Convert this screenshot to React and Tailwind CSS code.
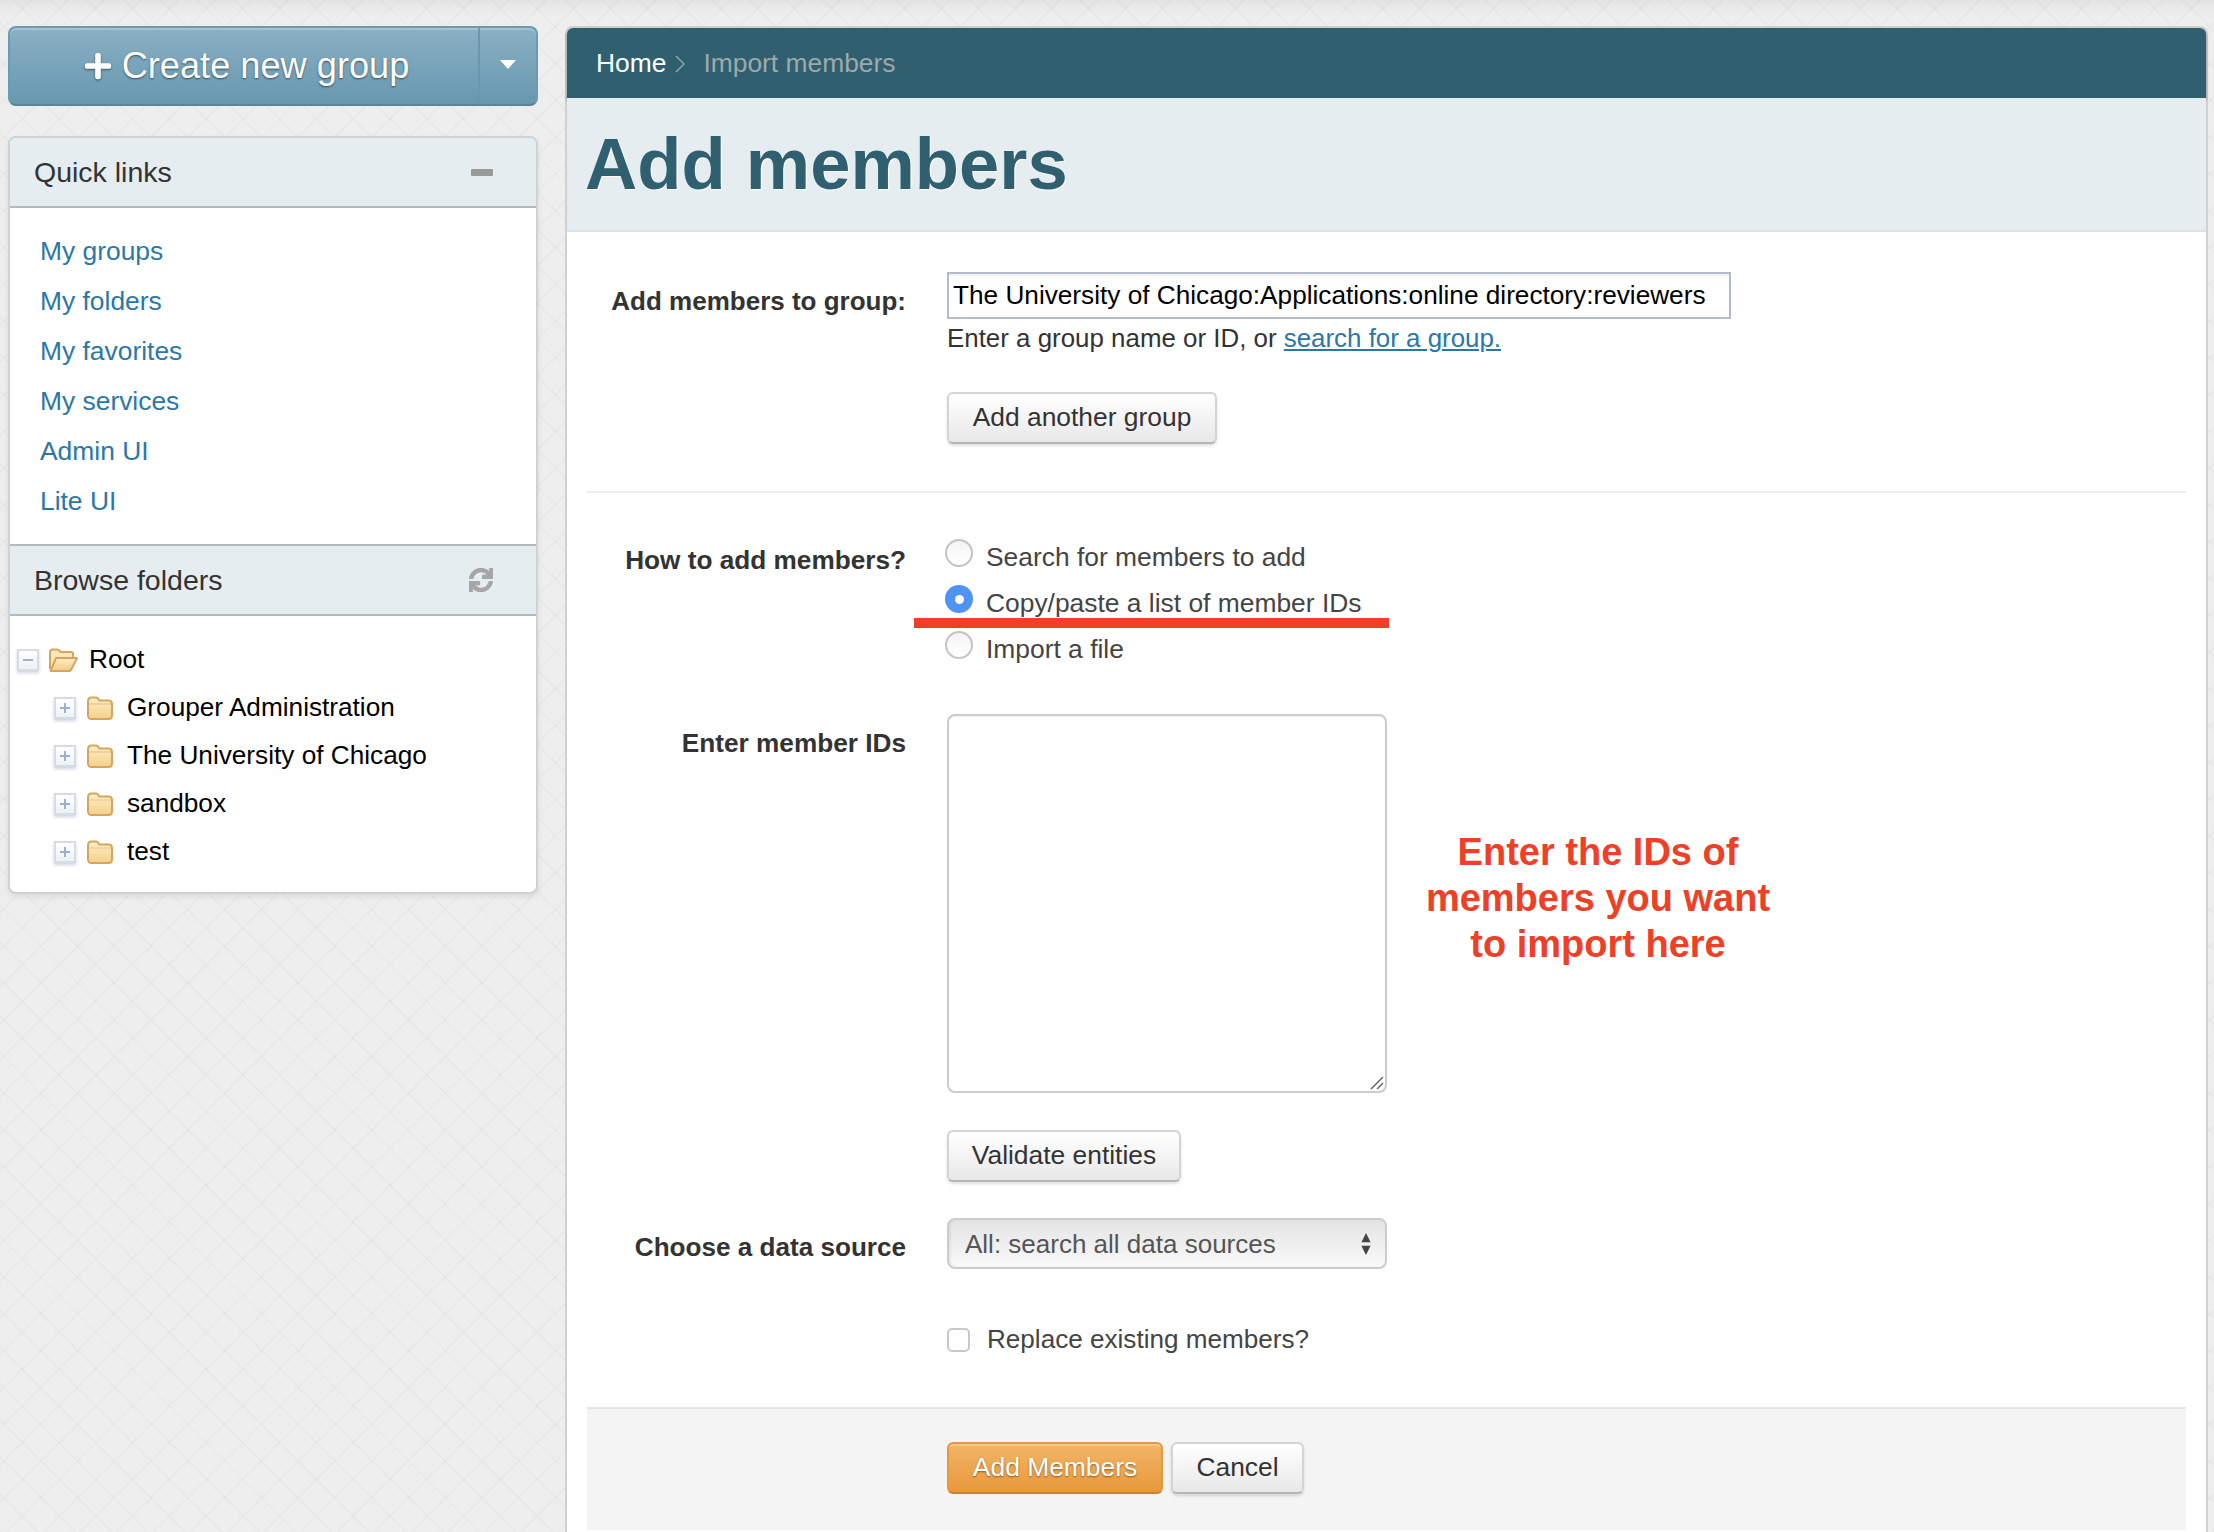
import { FaPlus, FaSync } from "react-icons/fa";

const quickLinks = ["My groups", "My folders", "My favorites", "My services", "Admin UI", "Lite UI"];
const treeItems = ["Grouper Administration", "The University of Chicago", "sandbox", "test"];
const radios = [
  { label: "Search for members to add", checked: false },
  { label: "Copy/paste a list of member IDs", checked: true },
  { label: "Import a file", checked: false },
];

const whiteBtn =
  "flex h-[52px] items-center justify-center rounded-md border-2 border-[#d4d4d4] border-b-[#b5b5b5] bg-gradient-to-b from-white to-[#e8e8e8] text-[26.4px] text-[#333] shadow-[0_2px_3px_rgba(0,0,0,0.12)]";

function ClosedFolder() {
  return (
    <svg width="28" height="26" viewBox="0 0 28 26" className="shrink-0">
      <defs>
        <linearGradient id="closedFill" x1="0" y1="0" x2="0" y2="1">
          <stop offset="0" stopColor="#fdf0cc" />
          <stop offset="1" stopColor="#f6cf86" />
        </linearGradient>
      </defs>
      <path
        d="M2 6.500C2 4 3.500 2.500 5.500 2.500h4.500c1.500 0 2.200 1 3.200 3H22.500c2.300 0 3.500 1.300 3.500 3.500V20.500c0 2.300-1.200 3.500-3.500 3.500H5.500c-2.300 0-3.500-1.200-3.500-3.500Z"
        fill="url(#closedFill)"
        stroke="#d6a55f"
        strokeWidth="2"
      />
      <path d="M3 9h22" stroke="#e8c388" strokeWidth="1.200" />
    </svg>
  );
}

function OpenFolder() {
  return (
    <svg width="31" height="26" viewBox="0 0 31 26" className="shrink-0">
      <defs>
        <linearGradient id="openFill" x1="0" y1="0" x2="0" y2="1">
          <stop offset="0" stopColor="#fdeec8" />
          <stop offset="1" stopColor="#f5cb80" />
        </linearGradient>
      </defs>
      <path
        d="M2 22V5c0-1.500 1-2.500 2.500-2.500h5c1.500 0 2 1 3 2.500H23c1.200 0 2 .8 2 2v3"
        fill="#fbe7b8"
        stroke="#d6a55f"
        strokeWidth="2"
      />
      <path
        d="M2.500 24 8 11h21l-5.500 11c-.5 1.200-1.200 2-2.500 2Z"
        fill="url(#openFill)"
        stroke="#d6a55f"
        strokeWidth="2"
        strokeLinejoin="round"
      />
    </svg>
  );
}

function TreeToggle({ open = false }) {
  return (
    <span className="relative flex h-[22px] w-[22px] shrink-0 items-center justify-center border-2 border-[#d5dce9] bg-gradient-to-b from-white to-[#eef1f7] shadow-[0_2px_3px_rgba(90,110,150,0.3)]">
      <span className="h-[2px] w-[10px] bg-[#9fb0cc]" />
      {!open && <span className="absolute h-[10px] w-[2px] bg-[#9fb0cc]" />}
    </span>
  );
}

function PanelHeader({ title, children }) {
  return (
    <div className="flex h-[70px] items-center justify-between border-b-2 border-[#b4b9bc] bg-[#e6edf0] pl-[24px] pr-[43px] text-[28.5px] text-[#333]">
      <span>{title}</span>
      {children}
    </div>
  );
}

function Sidebar() {
  return (
    <aside className="ml-2 mr-[27px] w-[530px] shrink-0 pt-[26px]">
      <div className="flex h-[80px] rounded-lg border-2 border-[#6c9ab0] border-b-[#5b8399] bg-gradient-to-b from-[#8ab0c4] to-[#6798b0] text-white shadow-[inset_0_2px_0_rgba(255,255,255,0.25)]">
        <div className="flex flex-1 items-center justify-center gap-[9px] pl-[4px] text-[36.2px] [text-shadow:0_1px_2px_rgba(0,0,0,0.55)]">
          <FaPlus className="h-[30px] w-[30px] drop-shadow-[0_1px_1px_rgba(0,0,0,0.5)]" />
          <span>Create new group</span>
        </div>
        <div className="flex w-[58px] items-center justify-center border-l-2 border-[#6c96ab]">
          <span className="mb-1 h-0 w-0 border-x-[8px] border-t-[9px] border-x-transparent border-t-white" />
        </div>
      </div>

      <div className="mt-[30px] overflow-hidden rounded-lg border-2 border-[#cfd1d2] bg-white shadow-[0_3px_6px_rgba(0,0,0,0.08)]">
        <PanelHeader title="Quick links">
          <span className="h-[7px] w-[22px] rounded-[1px] bg-[#999]" />
        </PanelHeader>
        <nav className="flex h-[338px] flex-col border-b-2 border-[#b4b9bc] pl-[30px] pt-[18px] text-[26.4px] text-[#2a78a8]">
          {quickLinks.map((link) => (
            <a key={link} className="flex h-[50px] items-center leading-none">
              {link}
            </a>
          ))}
        </nav>
        <PanelHeader title="Browse folders">
          <FaSync className="h-[24px] w-[24px] text-[#a6a6a6]" stroke="currentColor" strokeWidth={24} />
        </PanelHeader>
        <div className="h-[276px] pl-[7px] pt-[20px] text-[26.2px] text-black">
          <div className="flex h-[48px] items-center">
            <TreeToggle open />
            <span className="ml-[9px]">
              <OpenFolder />
            </span>
            <span className="ml-[10px]">Root</span>
          </div>
          {treeItems.map((item) => (
            <div key={item} className="flex h-[48px] items-center pl-[37px]">
              <TreeToggle />
              <span className="ml-[10px]">
                <ClosedFolder />
              </span>
              <span className="ml-[13px]">{item}</span>
            </div>
          ))}
        </div>
      </div>
    </aside>
  );
}

function Row({ label, className = "", labelClass = "text-[26.2px]", children }) {
  return (
    <div className={`grid grid-cols-[319px_1fr] gap-x-[41px] ${className}`}>
      <div className={`text-right font-bold text-[#333] ${labelClass}`}>{label}</div>
      <div>{children}</div>
    </div>
  );
}

function Radio({ checked }) {
  return checked ? (
    <span className="flex h-[28px] w-[28px] shrink-0 items-center justify-center rounded-full bg-[#4f94f2]">
      <span className="h-[9px] w-[9px] rounded-full bg-white" />
    </span>
  ) : (
    <span className="h-[28px] w-[28px] shrink-0 rounded-full border-2 border-[#c4c4c4] bg-gradient-to-b from-[#f4f4f4] to-white" />
  );
}

function Main() {
  return (
    <main className="mr-[6px] flex min-h-0 flex-1 flex-col rounded-t-lg border-x-2 border-t-2 border-[#d0d0d0] bg-white">
      <div className="flex h-[70px] items-center rounded-t-md bg-[#30606f] pl-[29px] pt-[2px] text-[26.4px] shadow-[0_2px_3px_rgba(0,0,0,0.45)]">
        <span className="text-white">Home</span>
        <svg width="10" height="18" viewBox="0 0 10 18" className="ml-[9px] mr-[18px]">
          <path d="M1 1l8 8-8 8" fill="none" stroke="#8fa6ae" strokeWidth="1.500" />
        </svg>
        <span className="text-[#9da9ad]">Import members</span>
      </div>
      <div className="flex h-[134px] items-center border-b-2 border-[#dfe1e2] bg-[#e6edf0] pl-[18px]">
        <h1 className="text-[72.4px] font-bold leading-none text-[#30606f] [text-shadow:1px_1px_0_#fff]">Add members</h1>
      </div>

      <div className="relative flex flex-1 flex-col px-5">
        <Row label="Add members to group:" className="pt-10" labelClass="pt-[10px] text-[26px]">
          <input
            readOnly
            value="The University of Chicago:Applications:online directory:reviewers"
            className="block h-[47px] w-[784px] border-2 border-[#b4bccb] bg-white px-[4px] text-[26.2px] text-black shadow-[inset_0_2px_2px_rgba(0,0,0,0.06)] outline-none"
          />
          <p className="mt-[4px] text-[25.9px] leading-[30px] text-[#333]">
            Enter a group name or ID, or <a className="text-[#2a78a8] underline">search for a group.</a>
          </p>
          <button className={`${whiteBtn} mt-[39px] w-[270px]`}>Add another group</button>
        </Row>

        <div className="mt-[47px] h-[2px] bg-[#eeeeee]" />

        <Row label="How to add members?" className="pt-[46px]" labelClass="pt-[2px] text-[26.2px]">
          <div className="-ml-[2px] flex flex-col gap-[18px]">
            {radios.map((radio) => (
              <div key={radio.label} className="flex h-[28px] items-start gap-[13px] text-[26.4px] text-[#444]">
                <Radio checked={radio.checked} />
                <span className="mt-[3px] leading-[30px]">{radio.label}</span>
              </div>
            ))}
          </div>
        </Row>
        {/* red annotation drawn over the form */}
        <div className="absolute left-[347px] top-[386px] h-[10px] w-[475px] bg-[#ee4026]" />

        <Row label="Enter member IDs" className="pt-[55px]" labelClass="pt-[10px] text-[26.2px]">
          <div className="relative w-[440px]">
            <textarea
              readOnly
              className="block h-[379px] w-[440px] resize-none rounded-lg border-2 border-[#cccccc] bg-white shadow-[inset_0_1px_1px_rgba(0,0,0,0.06)] outline-none"
            />
            <svg width="14" height="14" viewBox="0 0 14 14" className="absolute bottom-[3px] right-[3px]">
              <path d="M1 13 13 1M7 13l6-6" stroke="#666" strokeWidth="1.500" />
            </svg>
          </div>
          <button className={`${whiteBtn} mt-[37px] w-[234px]`}>Validate entities</button>
        </Row>
        <div className="absolute left-[1031px] top-[597px] w-[500px] -translate-x-[250px] text-center text-[38px] font-bold leading-[46px] text-[#ee4026]">
          Enter the IDs of
          <br />
          members you want
          <br />
          to import here
        </div>

        <Row label="Choose a data source" className="pt-[36px]" labelClass="pt-[10px] text-[26.1px]">
          <div className="flex h-[51px] w-[440px] items-center justify-between rounded-lg border-2 border-[#cccccc] bg-gradient-to-b from-[#e4e4e4] to-[#f9f9f9] pl-[16px] pr-[13px] pt-[1px] text-[26px] text-[#555] shadow-[inset_2px_0_2px_rgba(0,0,0,0.06)]">
            <span>All: search all data sources</span>
            <svg width="12" height="24" viewBox="0 0 12 26">
              <path d="M6 1 11 11H1Z M1 15h10L6 25Z" fill="#444" />
            </svg>
          </div>
        </Row>

        <Row label="" className="pt-[59px]">
          <label className="flex h-[24px] items-center gap-[17px] text-[26.1px] text-[#444]">
            <span className="h-[24px] w-[23px] shrink-0 rounded-[5px] border-2 border-[#c9c9c9] bg-white" />
            Replace existing members?
          </label>
        </Row>

        <div className="mt-[55px] flex h-[123px] gap-[8px] border-t-2 border-[#e5e5e5] bg-[#f4f4f4] pl-[360px] pt-[33px]">
          <button className="flex h-[52px] w-[216px] items-center justify-center rounded-md border-2 border-[#e39a3f] border-b-[#c9832c] bg-gradient-to-b from-[#f3b565] to-[#e8983a] text-[26.4px] text-white shadow-[inset_0_2px_0_rgba(255,255,255,0.25)] [text-shadow:0_1px_2px_rgba(0,0,0,0.45)]">
            Add Members
          </button>
          <button className={`${whiteBtn} w-[133px]`}>Cancel</button>
        </div>
      </div>
    </main>
  );
}

export default function App() {
  return (
    <div className="flex h-[1532px] w-[2214px] overflow-hidden bg-[#eeeeee] bg-[repeating-linear-gradient(45deg,rgba(0,0,0,0.018)_0_2px,transparent_2px_26px),repeating-linear-gradient(-45deg,rgba(0,0,0,0.018)_0_2px,transparent_2px_26px)] font-['Liberation_Sans',Arial,sans-serif] shadow-[inset_0_14px_14px_-8px_rgba(0,0,0,0.05)]">
      <Sidebar />
      <div className="flex h-[1532px] flex-1 pt-[26px]">
        <Main />
      </div>
    </div>
  );
}
